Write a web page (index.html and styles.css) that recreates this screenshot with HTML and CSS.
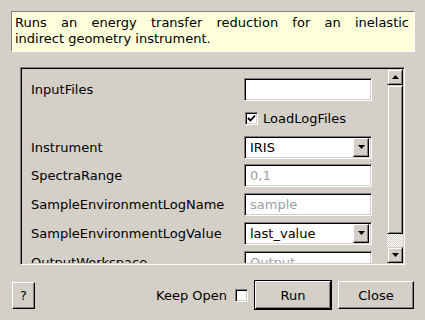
FILE: index.html
```html
<!DOCTYPE html>
<html lang="en">
<head>
  <meta charset="UTF-8" />
  <title>Algorithm Dialog</title>
  <link rel="stylesheet" href="styles.css">
</head>
<body>
  <div class="desc">
    <div class="desc-first">Runs an energy transfer reduction for an inelastic</div>
    <div>indirect geometry instrument.</div>
  </div>

  <div class="frame">
    <div class="viewport">
      <div class="props">
        <label>InputFiles</label>
        <div class="field"></div>

        <span></span>
        <div class="check-row">
          <span class="checkbox">
            <svg width="9" height="9" viewBox="0 0 9 9"><polyline points="1,4 3.5,6.5 8,1.5" fill="none" stroke="#000" stroke-width="1.8"/></svg>
          </span>
          LoadLogFiles
        </div>

        <label>Instrument</label>
        <div class="combo">
          <span>IRIS</span>
          <span class="combo-btn">
            <svg width="7" height="4" viewBox="0 0 7 4"><polygon points="0,0 7,0 3.5,4" fill="#000"/></svg>
          </span>
        </div>

        <label>SpectraRange</label>
        <div class="field hint">0,1</div>

        <label>SampleEnvironmentLogName</label>
        <div class="field hint">sample</div>

        <label>SampleEnvironmentLogValue</label>
        <div class="combo">
          <span>last_value</span>
          <span class="combo-btn">
            <svg width="7" height="4" viewBox="0 0 7 4"><polygon points="0,0 7,0 3.5,4" fill="#000"/></svg>
          </span>
        </div>

        <label>OutputWorkspace</label>
        <div class="field hint">Output</div>
      </div>
    </div>
    <div class="scrollbar">
      <div class="sb-btn">
        <svg width="7" height="4" viewBox="0 0 7 4"><polygon points="3.5,0 7,4 0,4" fill="#000"/></svg>
      </div>
      <div class="sb-track">
        <div class="sb-thumb"></div>
      </div>
      <div class="sb-btn">
        <svg width="7" height="4" viewBox="0 0 7 4"><polygon points="0,0 7,0 3.5,4" fill="#000"/></svg>
      </div>
    </div>
  </div>

  <div class="buttons">
    <button type="button" class="btn help-btn">?</button>
    <span class="keep-open">Keep Open</span>
    <span class="checkbox"></span>
    <span class="default-frame"><button type="button" class="btn">Run</button></span>
    <button type="button" class="btn close-btn">Close</button>
  </div>
</body>
</html>
```

FILE: styles.css
```css
body {
  margin: 0;
  padding: 0;
  background: #d4d0c8;
  font-family: "DejaVu Sans", sans-serif;
  font-size: 13px;
  color: #000;
}

.desc {
  margin: 11px 10px 0 11px;
  padding: 3px 5px 4px 3px;
  line-height: 16px;
  background: #ffffdc;
  border: 1px solid;
  border-color: #808080 #ffffff #ffffff #808080;
}

.desc-first {
  text-align: justify;
  text-align-last: justify;
}

/* sunken scroll area */
.frame {
  display: flex;
  box-sizing: border-box;
  width: 385px;
  height: 198px;
  margin: 15px 0 0 20px;
  padding: 1px;
  border: 1px solid;
  border-color: #808080 #ffffff #ffffff #808080;
  box-shadow: inset 1px 1px #000;
}

.viewport {
  flex: 1;
  overflow: hidden;
  padding: 9px 0 0 9px;
}

.props {
  display: grid;
  grid-template-columns: 213px 128px;
  grid-auto-rows: 23px;
  row-gap: 5.8px;
  align-items: center;
}

.props label {
  white-space: nowrap;
}

.field,
.combo {
  box-sizing: border-box;
  height: 23px;
  display: flex;
  align-items: center;
  padding: 0 3px 0 5px;
  background: #fff;
  border: 1px solid;
  border-color: #808080 #ffffff #ffffff #808080;
  box-shadow: inset 1px 1px #000, inset -1px -1px #d4d0c8;
}

.hint {
  color: #a0a0a0;
}

.combo {
  justify-content: space-between;
  padding-right: 2px;
}

.combo-btn {
  box-sizing: border-box;
  width: 16px;
  height: 19px;
  display: flex;
  align-items: center;
  justify-content: center;
  background: #d4d0c8;
  border: 1px solid;
  border-color: #ffffff #000 #000 #ffffff;
  box-shadow: inset -1px -1px #808080;
}

.check-row {
  display: flex;
  align-items: center;
  gap: 5px;
  padding-left: 1px;
}

.checkbox {
  box-sizing: border-box;
  width: 13px;
  height: 13px;
  display: inline-flex;
  align-items: center;
  justify-content: center;
  background: #fff;
  border: 1px solid;
  border-color: #808080 #ffffff #ffffff #808080;
  box-shadow: inset 1px 1px #000, inset -1px -1px #d4d0c8;
}

/* scrollbar */
.scrollbar {
  width: 16px;
  display: flex;
  flex-direction: column;
}

.sb-btn,
.sb-thumb {
  box-sizing: border-box;
  background: #d4d0c8;
  border: 1px solid;
  border-color: #d4d0c8 #000 #000 #d4d0c8;
  box-shadow: inset 1px 1px #fff, inset -1px -1px #808080;
}

.sb-btn {
  height: 16px;
  display: flex;
  align-items: center;
  justify-content: center;
}

.sb-track {
  flex: 1;
  background: conic-gradient(#ffffff 25%, #d4d0c8 0 50%, #ffffff 0 75%, #d4d0c8 0);
  background-size: 2px 2px;
}

.sb-thumb {
  height: 149px;
}

/* bottom buttons */
.buttons {
  display: flex;
  align-items: center;
  height: 30px;
  margin-top: 15px;
  padding: 0 11px 0 12px;
}

.btn {
  box-sizing: border-box;
  height: 28px;
  padding: 0;
  font-family: inherit;
  font-size: 13px;
  color: #000;
  background: #d4d0c8;
  border: 1px solid;
  border-color: #ffffff #000 #000 #ffffff;
  box-shadow: inset -1px -1px #808080;
  cursor: pointer;
}

.help-btn {
  width: 23px;
  height: 27px;
}

.keep-open {
  margin-left: auto;
  margin-right: 8px;
}

.default-frame {
  display: flex;
  margin-left: 6px;
  border: 1px solid #000;
}

.default-frame .btn {
  width: 76px;
}

.close-btn {
  width: 76px;
  margin-left: 6px;
}
```
